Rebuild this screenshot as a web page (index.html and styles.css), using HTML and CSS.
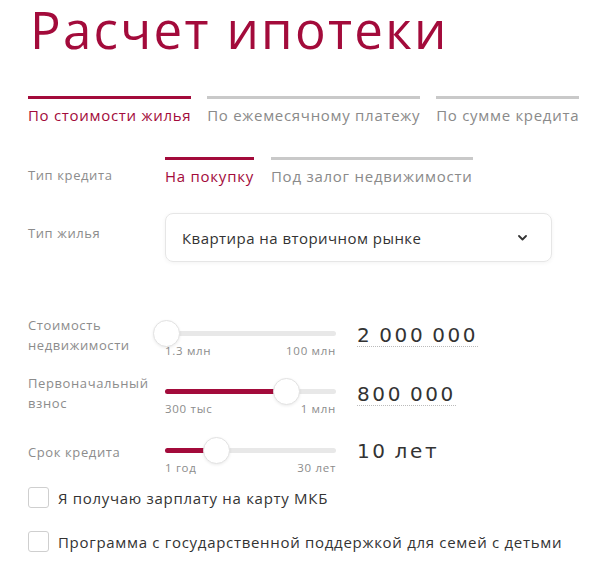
FILE: index.html
```html
<!DOCTYPE html>
<html lang="ru">
<head>
<meta charset="utf-8">
<title>Расчет ипотеки</title>
<link rel="stylesheet" href="styles.css">
</head>
<body>
<div class="page">
  <h1 class="title">Расчет ипотеки</h1>
  <nav class="tabs">
    <span class="tab active">По стоимости жилья</span>
    <span class="tab">По ежемесячному платежу</span>
    <span class="tab">По сумме кредита</span>
  </nav>

  <div class="row row-type">
    <div class="label">Тип кредита</div>
    <div class="subtabs">
      <span class="subtab active">На покупку</span>
      <span class="subtab">Под залог недвижимости</span>
    </div>
  </div>

  <div class="row row-select">
    <div class="label">Тип жилья</div>
    <div class="select">
      <span>Квартира на вторичном рынке</span>
      <svg class="chevron" width="9" height="6" viewBox="0 0 9 6"><polyline points="1,1 4.5,4.5 8,1" fill="none" stroke="#333" stroke-width="1.8" stroke-linecap="round" stroke-linejoin="round"/></svg>
    </div>
  </div>

  <div class="row slider-row first">
    <div class="label">Стоимость<br>недвижимости</div>
    <div class="slider">
      <div class="track"><div class="fill" style="width:1%"></div><div class="thumb" style="left:1%"></div></div>
      <div class="limits"><span>1.3 млн</span><span>100 млн</span></div>
    </div>
    <div class="value underlined">2 000 000</div>
  </div>

  <div class="row slider-row">
    <div class="label">Первоначальный<br>взнос</div>
    <div class="slider">
      <div class="track"><div class="fill" style="width:71.3%"></div><div class="thumb" style="left:71.3%"></div></div>
      <div class="limits"><span>300 тыс</span><span>1 млн</span></div>
    </div>
    <div class="value underlined">800 000</div>
  </div>

  <div class="row slider-row">
    <div class="label">Срок кредита</div>
    <div class="slider">
      <div class="track"><div class="fill" style="width:30.4%"></div><div class="thumb" style="left:30.4%"></div></div>
      <div class="limits"><span>1 год</span><span>30 лет</span></div>
    </div>
    <div class="value">10 лет</div>
  </div>

  <div class="checks">
    <label class="check"><span class="box"></span>Я получаю зарплату на карту МКБ</label>
    <label class="check"><span class="box"></span>Программа с государственной поддержкой для семей с детьми</label>
  </div>
</div>
</body>
</html>
```

FILE: styles.css
```css
* { box-sizing: border-box; }
html, body { margin: 0; padding: 0; background: #fff; }
body {
  font-family: "Open Sans", "Liberation Sans", sans-serif;
  color: #333;
}
.page {
  padding: 0 19px 0 28px;
  width: 597px;
}
.title {
  margin: 0;
  font-weight: 400;
  font-size: 51px;
  line-height: 58px;
  color: #a30b3b;
  padding-left: 2px;
  letter-spacing: 2.3px;
}
.tabs {
  display: flex;
  gap: 16px;
  margin-top: 38px;
}
.tab {
  border-top: 3px solid #c9c9c9;
  padding-top: 6px;
  font-size: 15px;
  line-height: 20px;
  letter-spacing: 0.7px;
  color: #8a8a8a;
  white-space: nowrap;
}
.tab.active {
  border-top-color: #a30b3b;
  color: #a30b3b;
}
.row {
  display: grid;
  grid-template-columns: 137px 171px auto;
}
.label {
  font-size: 13px;
  line-height: 20px;
  letter-spacing: 0.6px;
  color: #8c8c8c;
}
.row-type { margin-top: 32px; }
.row-type .label { padding-top: 8px; }
.subtabs {
  grid-column: 2 / 4;
  display: flex;
  gap: 17px;
}
.subtab {
  border-top: 3px solid #c9c9c9;
  padding-top: 6px;
  font-size: 15px;
  line-height: 20px;
  letter-spacing: 0.75px;
  color: #8a8a8a;
  white-space: nowrap;
}
.subtab.active {
  border-top-color: #a30b3b;
  color: #a30b3b;
}
.row-select { margin-top: 27px; }
.row-select .label { padding-top: 10px; }
.select {
  grid-column: 2 / 4;
  width: 387px;
  height: 49px;
  border: 1px solid #e6e6e6;
  border-radius: 8px;
  box-shadow: 0 1px 4px rgba(0,0,0,0.05);
  display: flex;
  align-items: center;
  justify-content: space-between;
  padding: 0 24px 0 16px;
  font-size: 15px;
  letter-spacing: 0.45px;
  color: #333;
}
.chevron { display: block; }
.slider-row { margin-top: 15px; }
.slider-row.first { margin-top: 51px; }
.slider-row .label {
  min-height: 40px;
  display: flex;
  align-items: center;
}
.slider { padding-top: 17.5px; }
.track {
  position: relative;
  height: 5px;
  border-radius: 3px;
  background: #e8e8e8;
}
.fill {
  height: 5px;
  border-radius: 3px;
  background: #a30b3b;
}
.thumb {
  position: absolute;
  top: 50%;
  width: 27px;
  height: 27px;
  margin-left: -13.5px;
  margin-top: -13.5px;
  border-radius: 50%;
  background: #fff;
  border: 1px solid #e2e2e2;
  box-shadow: 0 1px 3px rgba(0,0,0,0.08);
}
.limits {
  display: flex;
  justify-content: space-between;
  margin-top: 9px;
  font-size: 11.5px;
  line-height: 12px;
  letter-spacing: 0.7px;
  color: #8c8c8c;
}
.value {
  align-self: start;
  justify-self: start;
  margin: 10px 0 0 21px;
  font-family: "DejaVu Sans", "Open Sans", sans-serif;
  font-size: 20px;
  line-height: 22px;
  letter-spacing: 2.6px;
  word-spacing: -2px;
  color: #333;
  white-space: nowrap;
}
.value.underlined {
  margin-top: 11px;
  border-bottom: 1px dotted #bbb;
}
.checks {
  margin-top: 13px;
  display: flex;
  flex-direction: column;
  gap: 22px;
}
.check {
  display: flex;
  align-items: center;
  gap: 9px;
  font-size: 15px;
  line-height: 22px;
  letter-spacing: 0.7px;
  color: #333;
  white-space: nowrap;
}
.box {
  width: 21px;
  height: 21px;
  border: 1px solid #cfcfcf;
  border-radius: 3px;
  background: #fff;
  flex: none;
}
```
